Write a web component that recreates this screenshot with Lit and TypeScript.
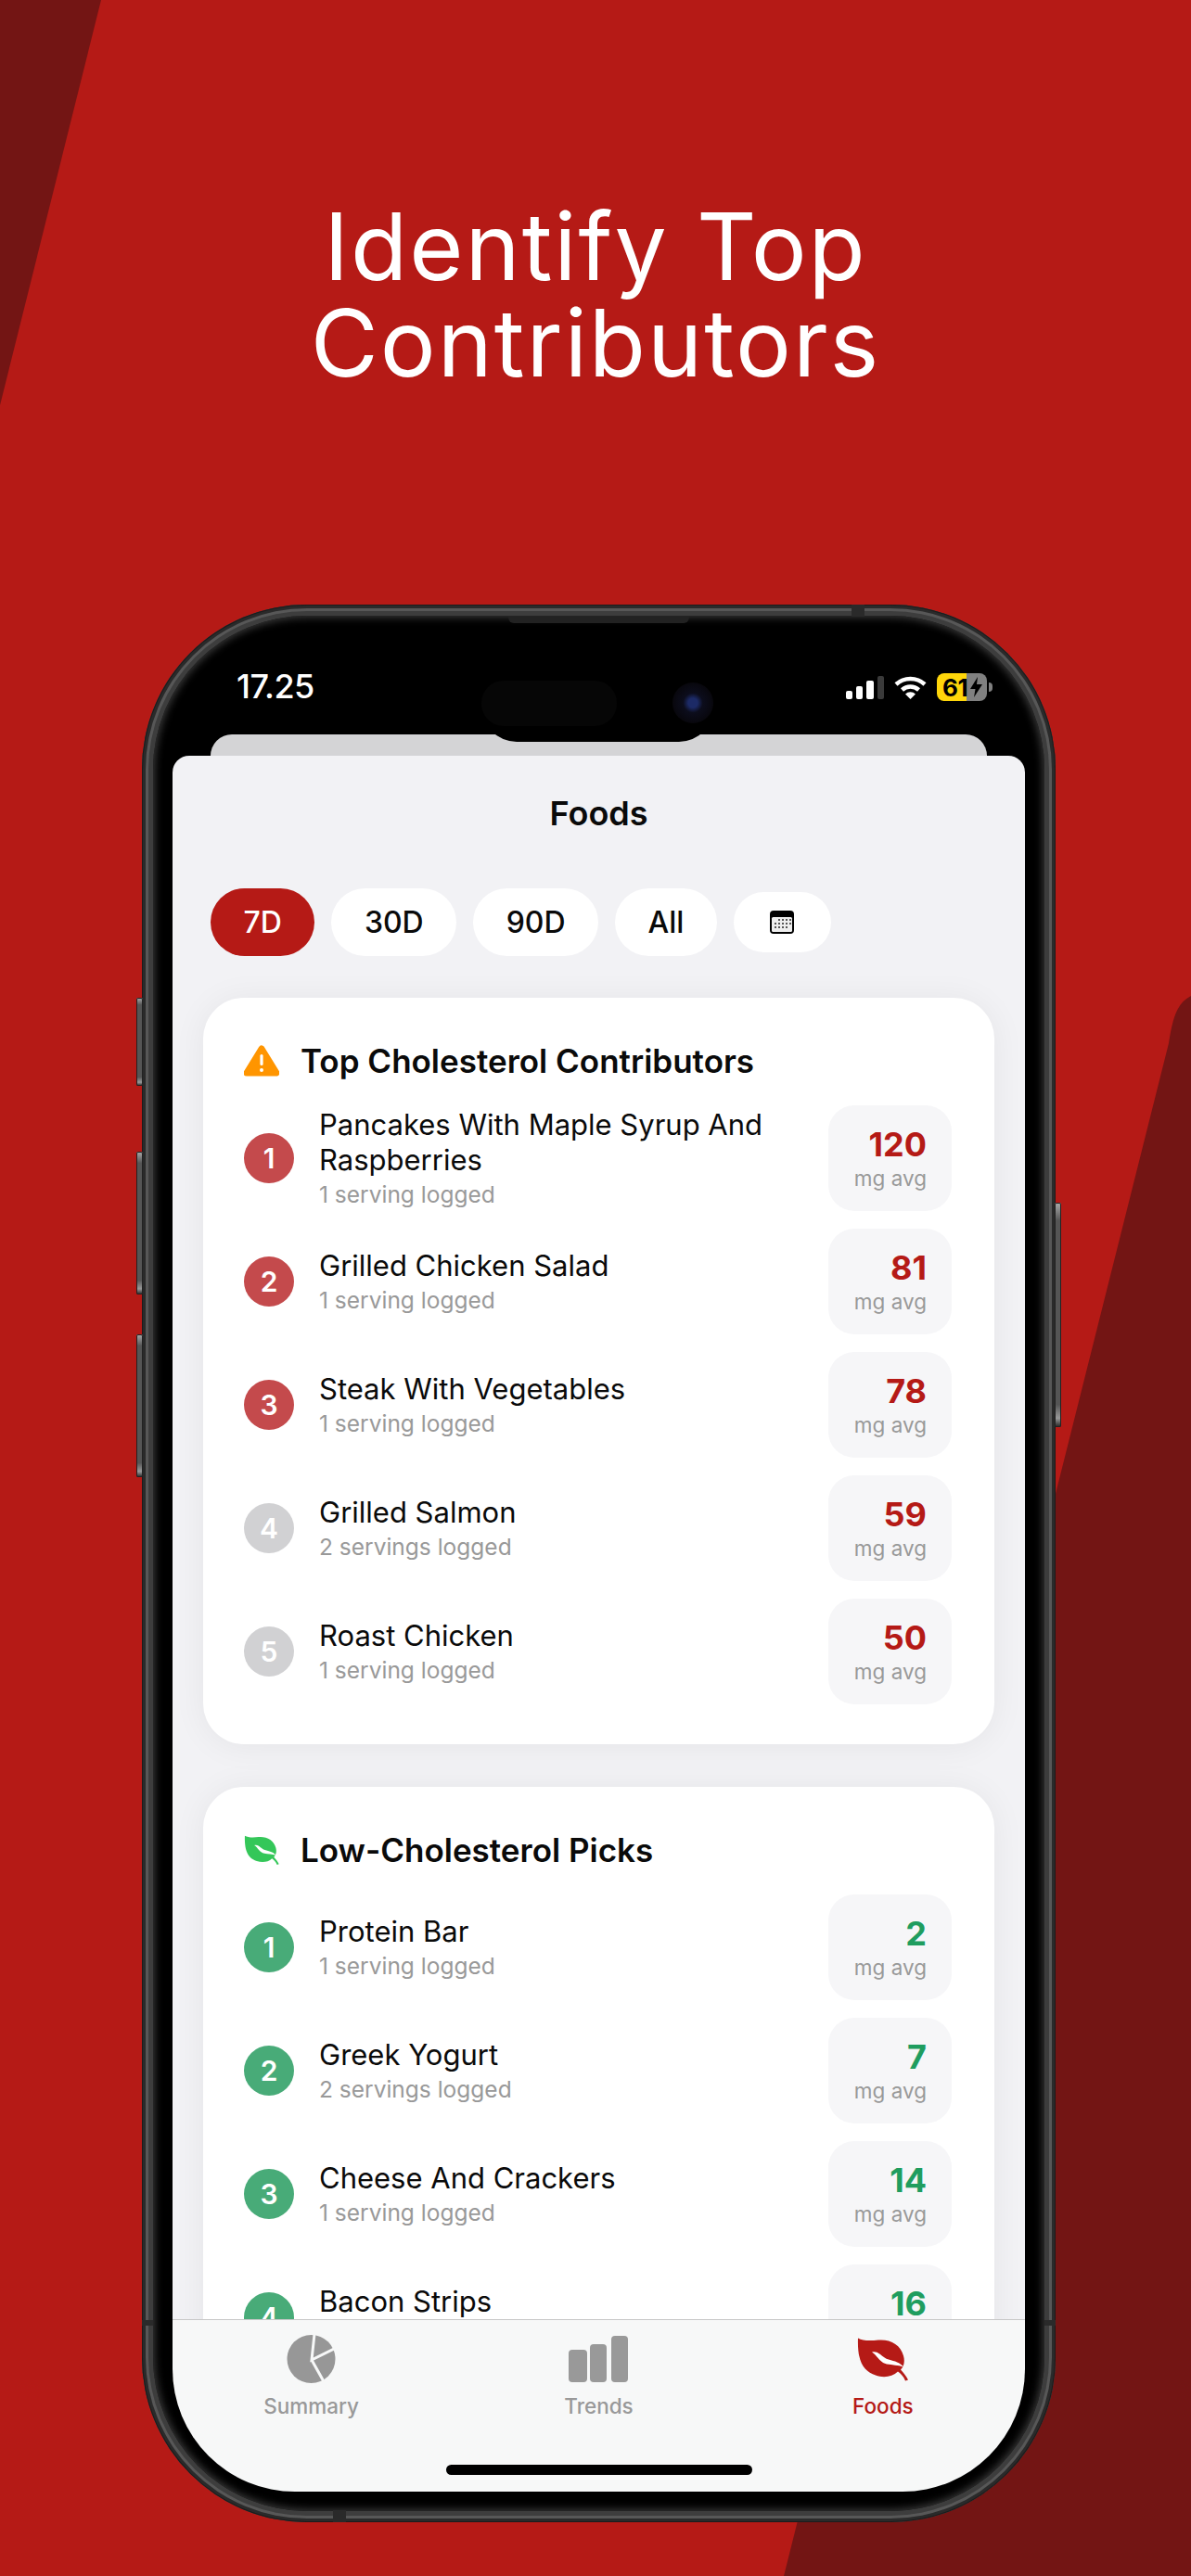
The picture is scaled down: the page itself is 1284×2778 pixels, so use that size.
import { LitElement, html, css, svg } from "lit";
import { customElement } from "lit/decorators.js";

const LEAF = "M1 1C6 4 14 4 23 3C36 2 47 8 50 20C52 27 50 32 47 35C50 38 53 42 55 46L52 47C50 42 47 39 44 37C38 43 28 44 20 41C8 37 0 28 1 1Z";
const VEIN = "M16 16C24 14 26 22 34 24C41 26 46 27 50 32C44 30 38 30 32 29C24 27 22 20 16 16Z";

const leaf = (cls: string) => html`<svg class=${cls} viewBox="0 0 55 47">${svg`<path class="leaf-body" d=${LEAF}/><path fill="#fff" d=${VEIN}/>`}</svg>`;

type Row = { name: string; sub: string; value: number; muted?: boolean };

const TOP: Row[] = [
  { name: "Pancakes With Maple Syrup And Raspberries", sub: "1 serving logged", value: 120 },
  { name: "Grilled Chicken Salad", sub: "1 serving logged", value: 81 },
  { name: "Steak With Vegetables", sub: "1 serving logged", value: 78 },
  { name: "Grilled Salmon", sub: "2 servings logged", value: 59, muted: true },
  { name: "Roast Chicken", sub: "1 serving logged", value: 50, muted: true },
];
const LOW: Row[] = [
  { name: "Protein Bar", sub: "1 serving logged", value: 2 },
  { name: "Greek Yogurt", sub: "2 servings logged", value: 7 },
  { name: "Cheese And Crackers", sub: "1 serving logged", value: 14 },
  { name: "Bacon Strips", sub: "1 serving logged", value: 16 },
];

@customElement("app-root")
export class AppRoot extends LitElement {
  static styles = css`
    :host { display: block; width: 1284px; height: 2778px; position: relative; overflow: hidden; background: #b51a16; font-family: Inter, "Liberation Sans", sans-serif; color: #0a0a0a; }
    .bg { position: absolute; inset: 0; width: 1284px; height: 2778px; }
    .bg path { fill: #731514; }
    .headline { position: relative; margin: 0; padding-top: 214px; height: 652px; box-sizing: border-box; text-align: center; color: #fff; font-size: 100px; line-height: 104px; font-weight: 400; letter-spacing: 2px; }
    .phone { position: relative; width: 985px; height: 2068px; margin-left: 153px; box-sizing: border-box; padding: 12px; border-radius: 178px; background: #3d3d3d; box-shadow: inset 0 0 0 1px #1c1c1c, inset 0 0 0 4px #2a2a2a, inset 0 0 0 7px #575757; }
    .bezel { height: 100%; box-sizing: border-box; padding: 21px; border-radius: 166px; background: #000; box-shadow: inset 0 0 9px 2px #3a3a3a; }
    .screen { position: relative; height: 100%; display: flex; flex-direction: column; overflow: hidden; border-radius: 132px; background: #000; }
    .btn { position: absolute; width: 7px; background: linear-gradient(180deg, #aaa 0, #555 8%, #555 90%, #999 96%, #222 100%); border-radius: 2px; box-shadow: inset 0 0 0 1px #222; }
    .b1 { left: -6px; top: 424px; height: 95px; }
    .b2 { left: -6px; top: 590px; height: 154px; }
    .b3 { left: -6px; top: 787px; height: 154px; }
    .b4 { right: -6px; top: 645px; height: 242px; }
    .speaker { position: absolute; left: 395px; top: 13px; width: 195px; height: 7px; background: #222; border-radius: 0 0 6px 6px; }
    .band { position: absolute; background: #2a2a2a; }
    .band.t { left: 765px; top: 0; width: 14px; height: 13px; }
    .band.bm { left: 206px; bottom: 0; width: 14px; height: 13px; }
    .band.l { left: 0; top: 1850px; width: 12px; height: 6px; }
    .band.r { right: 0; top: 1850px; width: 12px; height: 6px; }

    .status { flex: none; height: 107px; box-sizing: border-box; padding: 28px 35px 0 69px; display: flex; align-items: flex-start; justify-content: space-between; color: #fff; }
    .time { font-size: 36px; line-height: 54px; font-weight: 500; letter-spacing: -0.5px; }
    .sysicons { display: flex; align-items: center; gap: 11px; padding-top: 13px; }
    .signal { width: 41px; height: 25px; display: block; }
    .wifi { width: 35px; height: 25px; display: block; }
    .battery { display: flex; align-items: center; gap: 2px; }
    .cell { width: 54px; height: 30px; border-radius: 8px; background: linear-gradient(90deg, #ffd60a 0 59%, #808080 59% 100%); display: flex; align-items: center; color: #000; font-size: 26px; font-weight: 700; padding-left: 6px; box-sizing: border-box; position: relative; letter-spacing: -0.5px; }
    .bolt { position: absolute; right: 5px; top: 4px; width: 13px; height: 22px; }
    .nub { width: 4px; height: 10px; background: #808080; border-radius: 0 4px 4px 0; }
    .island { position: absolute; left: 333px; top: 36px; width: 251px; height: 79px; border-radius: 38px; background: #000; display: flex; align-items: flex-start; padding: 13px 0 0 0; box-sizing: border-box; }
    .pill { width: 146px; height: 49px; margin-right: 60px; border-radius: 24px; background: #060606; }
    .cam { width: 44px; height: 44px; margin-top: 2px; border-radius: 50%; background: radial-gradient(circle, #1c2a66 0 16%, #0c0d1c 34%, #08070d 70%, #040404 100%); }
    .back { flex: none; height: 23px; margin: 0 41px; border-radius: 24px 24px 0 0; background: #d4d4d6; }
    .sheet { flex: 1; min-height: 0; overflow: hidden; background: #f2f2f5; border-radius: 18px 18px 0 0; padding: 40px 33px 0; box-sizing: border-box; }
    .title { text-align: center; font-size: 36px; line-height: 44px; font-weight: 600; margin: 0 0 59px; }
    .range { display: flex; align-items: center; gap: 18px; padding-left: 8px; margin-bottom: 45px; }
    .range span { height: 73px; padding: 0 35.5px; border-radius: 36.5px; background: #fff; display: flex; align-items: center; font-size: 32px; font-weight: 500; }
    .range span.on { background: #b51a16; color: #fff; }
    .range span.cal { height: 65px; width: 105px; padding: 0; justify-content: center; border-radius: 32.5px; }
    .cal svg { width: 26px; height: 25px; display: block; }
    .card { background: #fff; border-radius: 44px; padding: 46px 46px 43px 44px; margin-bottom: 46px; box-shadow: 0 2px 36px rgba(0,0,0,.06); }
    .card-h { display: flex; align-items: center; gap: 23px; height: 44px; margin-bottom: 26px; }
    .card-h h2 { margin: 0; font-size: 35px; line-height: 44px; font-weight: 600; }
    .warn { width: 38px; height: 34px; flex: none; }
    .gleaf { width: 38px; height: 32px; flex: none; fill: #34c759; }
    .gleaf .leaf-body { fill: #34c759; }
    .rows { display: flex; flex-direction: column; gap: 19px; }
    .row { display: flex; align-items: center; height: 114px; }
    .rank { flex: none; width: 54px; height: 54px; border-radius: 50%; color: #fff; display: flex; align-items: center; justify-content: center; font-size: 30px; font-weight: 600; margin-right: 27px; }
    .rank.red { background: #c44a4c; }
    .rank.muted { background: #d1d1d3; }
    .rank.green { background: #48ab78; }
    .info { flex: 1; min-width: 0; padding-right: 50px; }
    .name { font-size: 31px; line-height: 38px; font-weight: 400; }
    .sub { font-size: 24.5px; line-height: 32px; color: #999; margin-top: 2px; }
    .val { flex: none; width: 133px; height: 114px; box-sizing: border-box; padding-right: 27px; border-radius: 28px; background: #f6f6f8; display: flex; flex-direction: column; justify-content: center; align-items: flex-end; }
    .num { font-size: 36px; line-height: 44px; font-weight: 700; }
    .num.red { color: #b51a16; }
    .num.green { color: #1f9d5f; }
    .unit { font-size: 22.5px; line-height: 30px; color: #999; }
    .tabbar { flex: none; height: 186px; box-sizing: border-box; border-top: 1px solid #c8c8c8; background: #f7f8f8; padding-top: 16px; display: flex; flex-direction: column; }
    .tabs { display: grid; grid-template-columns: 1fr 1fr 1fr; }
    .tab { display: flex; flex-direction: column; align-items: center; color: #999; font-size: 22.5px; font-weight: 500; line-height: 30px; gap: 10px; }
    .tab.first { padding-right: 7px; }
    .tab.on { color: #b51a16; }
    .tab svg { height: 52px; display: block; }
    .foods-icon { width: 55px; }
    .foods-icon .leaf-body { fill: #b51a16; }
    .home { width: 330px; height: 11px; border-radius: 6px; background: #000; margin: auto auto 18px; }
  `;

  private rows(list: Row[], tone: "red" | "green") {
    return html`<div class="rows">${list.map((r, i) => html`
      <div class="row">
        <div class="rank ${r.muted ? "muted" : tone}">${i + 1}</div>
        <div class="info"><div class="name">${r.name}</div><div class="sub">${r.sub}</div></div>
        <div class="val"><div class="num ${tone}">${r.value}</div><div class="unit">mg avg</div></div>
      </div>`)}</div>`;
  }

  render() {
    return html`
      <svg class="bg" viewBox="0 0 1284 2778"><path d="M0 0H109L0 437Z"/><path d="M1284 1074C1268 1082 1264 1100 1260 1125L845 2778H1284Z"/></svg>
      <h1 class="headline">Identify Top<br>Contributors</h1>
      <div class="phone">
        <i class="btn b1"></i><i class="btn b2"></i><i class="btn b3"></i><i class="btn b4"></i>
        <i class="band t"></i><i class="band bm"></i><i class="band l"></i><i class="band r"></i>
        <div class="bezel">
          <div class="screen">
            <div class="status">
              <div class="time">17.25</div>
              <div class="sysicons">
                <svg class="signal" viewBox="0 0 41 25"><rect x="0" y="16" width="7" height="9" rx="2" fill="#fff"/><rect x="11" y="11" width="7" height="14" rx="2" fill="#fff"/><rect x="22" y="5" width="8" height="20" rx="2" fill="#fff"/><rect x="34" y="0" width="7" height="25" rx="2" fill="#3a3a3a"/></svg>
                <svg class="wifi" viewBox="0 0 35 25"><path d="M2 9A23 23 0 0 1 33 9" fill="none" stroke="#fff" stroke-width="4.5"/><path d="M8.5 15A13.5 13.5 0 0 1 26.5 15" fill="none" stroke="#fff" stroke-width="4.5"/><path d="M17.5 25L12 19.5A8 8 0 0 1 23 19.5Z" fill="#fff"/></svg>
                <div class="battery">
                  <div class="cell">61<svg class="bolt" viewBox="0 0 13 22"><path d="M8 0L0 13H5.5L4 22L13 8H7Z" fill="#000"/></svg></div>
                  <div class="nub"></div>
                </div>
              </div>
            </div>
            <div class="back"></div>
            <div class="sheet">
              <h1 class="title">Foods</h1>
              <div class="range">
                <span class="on">7D</span><span>30D</span><span>90D</span><span>All</span>
                <span class="cal"><svg viewBox="0 0 26 25"><rect width="26" height="25" rx="4" fill="#000"/><rect x="2" y="7" width="22" height="16" rx="1.5" fill="#eee"/><g fill="#222"><circle cx="10" cy="10" r="1"/><circle cx="14" cy="10" r="1"/><circle cx="18" cy="10" r="1"/><circle cx="22" cy="10" r="1"/><circle cx="6" cy="14" r="1"/><circle cx="10" cy="14" r="1"/><circle cx="14" cy="14" r="1"/><circle cx="18" cy="14" r="1"/><circle cx="22" cy="14" r="1"/><circle cx="6" cy="18" r="1"/><circle cx="10" cy="18" r="1"/><circle cx="14" cy="18" r="1"/><circle cx="18" cy="18" r="1"/></g></svg></span>
              </div>
              <section class="card">
                <div class="card-h">
                  <svg class="warn" viewBox="0 0 38 34"><path d="M19 4L35 30H3Z" fill="#ff9500" stroke="#ff9500" stroke-width="7" stroke-linejoin="round"/><rect x="17.4" y="10" width="3.2" height="12" rx="1.6" fill="#fff"/><circle cx="19" cy="27" r="2" fill="#fff"/></svg>
                  <h2>Top Cholesterol Contributors</h2>
                </div>
                ${this.rows(TOP, "red")}
              </section>
              <section class="card">
                <div class="card-h">
                  ${leaf("gleaf")}
                  <h2>Low-Cholesterol Picks</h2>
                </div>
                ${this.rows(LOW, "green")}
              </section>
            </div>
            <div class="tabbar">
              <div class="tabs">
                <div class="tab first">
                  <svg viewBox="0 0 53 52" style="width:53px"><circle cx="26.5" cy="26" r="26" fill="#979797"/><path d="M30 -1L27 27L53 14M27 27L41 52" fill="none" stroke="#f7f8f8" stroke-width="3"/></svg>
                  Summary
                </div>
                <div class="tab">
                  <svg viewBox="0 0 64 52" style="width:64px"><rect x="0" y="16" width="20" height="35" rx="4" fill="#999"/><rect x="23" y="10" width="18" height="41" rx="4" fill="#999"/><rect x="46" y="1" width="18" height="50" rx="4" fill="#999"/></svg>
                  Trends
                </div>
                <div class="tab on">${leaf("foods-icon")}Foods</div>
              </div>
              <div class="home"></div>
            </div>
            <div class="island"><div class="pill"></div><div class="cam"></div></div>
          </div>
        </div>
        <div class="speaker"></div>
      </div>
    `;
  }
}
